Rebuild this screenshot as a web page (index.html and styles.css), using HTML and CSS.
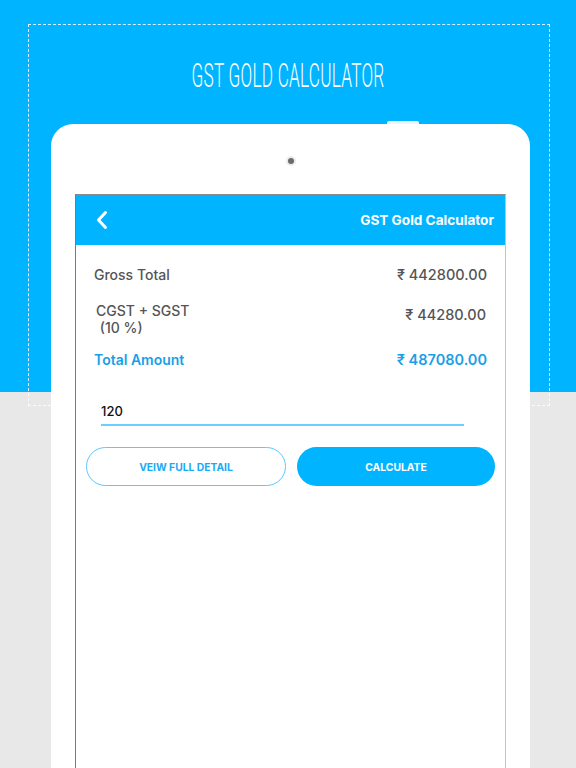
FILE: index.html
```html
<!DOCTYPE html>
<html>
<head>
<meta charset="utf-8">
<link rel="stylesheet" href="styles.css">
</head>
<body>
<div class="page">
  <div class="dash-frame"></div>
  <h1 class="hero-title"><span>GST GOLD CALCULATOR</span></h1>
  <div class="tablet">
    <div class="tablet-tab"></div>
    <div class="camera"><div class="lens"></div></div>
    <div class="screen">
      <div class="app-bar">
        <svg class="back" width="14" height="20" viewBox="0 0 14 20"><path d="M10.5 2.5 L3.5 10 L10.5 17.5" fill="none" stroke="#fff" stroke-width="3" stroke-linecap="round" stroke-linejoin="round"/></svg>
        <div class="app-title">GST Gold Calculator</div>
      </div>
      <div class="content">
        <div class="row row-gross">
          <div class="label">Gross Total</div>
          <div class="value">₹ 442800.00</div>
        </div>
        <div class="row row-tax">
          <div class="label label-tax">CGST + SGST<br>&nbsp;(10 %)</div>
          <div class="value value-tax">₹ 44280.00</div>
        </div>
        <div class="row row-total">
          <div class="label total">Total Amount</div>
          <div class="value total">₹ 487080.00</div>
        </div>
        <div class="field">120</div>
        <div class="buttons">
          <div class="btn btn-outline">VEIW FULL DETAIL</div>
          <div class="btn btn-fill">CALCULATE</div>
        </div>
      </div>
    </div>
  </div>
</div>
</body>
</html>
```
FILE: styles.css
```css
html, body {
  margin: 0;
  padding: 0;
}
body {
  width: 576px;
  height: 768px;
  overflow: hidden;
  background: linear-gradient(#00b4ff 0, #00b4ff 392px, #e8e8e8 392px);
  font-family: Inter, "Liberation Sans", sans-serif;
}
.page {
  position: relative;
  width: 576px;
  height: 768px;
  padding-top: 53px;
  box-sizing: border-box;
  overflow: hidden;
}
.dash-frame {
  position: absolute;
  left: 28px;
  top: 24px;
  width: 522px;
  height: 382px;
  border: 1px dashed rgba(255,255,255,0.85);
  box-sizing: border-box;
}
.hero-title {
  margin: 0;
  height: 44px;
  text-align: center;
  font-family: Roboto, "DejaVu Sans", sans-serif;
  font-weight: 300;
  font-size: 34px;
  line-height: 44px;
  color: #fff;
}
.hero-title span {
  display: inline-block;
  transform: scaleX(0.505);
  letter-spacing: 0.5px;
}
.tablet {
  position: relative;
  margin: 27px 0 0 51px;
  width: 479px;
  height: 644px;
  background: #fff;
  border-radius: 22px 22px 0 0;
  padding-top: 32px;
  box-sizing: border-box;
}
.tablet-tab {
  position: absolute;
  left: 336px;
  top: -3px;
  width: 32px;
  height: 3px;
  background: #e8f7ff;
  border-radius: 2px 2px 0 0;
}
.camera {
  margin: 0 auto;
  width: 10px;
  height: 10px;
  border-radius: 50%;
  background: #ececec;
  display: flex;
  align-items: center;
  justify-content: center;
}
.lens {
  width: 6px;
  height: 6px;
  border-radius: 50%;
  background: #6b6b6b;
}
.screen {
  margin: 28px 0 0 24px;
  width: 431px;
  height: 574px;
  border-top: 1px solid #8a8a8a;
  border-left: 1px solid #7a7a7a;
  border-right: 1px solid #c4c4c4;
  box-sizing: border-box;
  background: #fff;
}
.app-bar {
  height: 50px;
  background: #00b4ff;
  display: flex;
  align-items: center;
  justify-content: space-between;
  padding: 0 11px 0 19px;
}
.back {
  display: block;
}
.app-title {
  color: #fff;
  font-weight: 700;
  font-size: 13.6px;
}
.content {
  padding: 0 18px;
}
.row {
  display: flex;
  justify-content: space-between;
  align-items: flex-start;
}
.label {
  color: #555;
  font-size: 14px;
  font-weight: 500;
  line-height: 20px;
}
.value {
  color: #555;
  font-size: 14.5px;
  font-weight: 500;
  line-height: 20px;
}
.row-gross {
  margin-top: 20px;
}
.row-tax {
  margin-top: 17px;
}
.label-tax {
  line-height: 17px;
  padding-left: 2px;
}
.value-tax {
  padding-top: 3px;
  padding-right: 1px;
}
.row-total {
  margin-top: 14px;
}
.total {
  color: #1a9fe6;
  font-weight: 600;
}
.field {
  margin: 32px 0 0 7px;
  width: 363px;
  height: 22px;
  font-size: 13px;
  line-height: 18px;
  font-weight: 500;
  color: #111;
  border-bottom: 2px solid #6ccfff;
  box-sizing: content-box;
}
.buttons {
  display: flex;
  gap: 11px;
  margin: 21px -8px 0;
}
.btn {
  flex: 1;
  height: 39px;
  border-radius: 20px;
  display: flex;
  align-items: center;
  justify-content: center;
  font-size: 10.3px;
  font-weight: 700;
  box-sizing: border-box;
}
.btn-outline {
  border: 1px solid #5cc8ff;
  color: #1aaaf5;
}
.btn-fill {
  background: #00b4ff;
  color: #fff;
}
```
